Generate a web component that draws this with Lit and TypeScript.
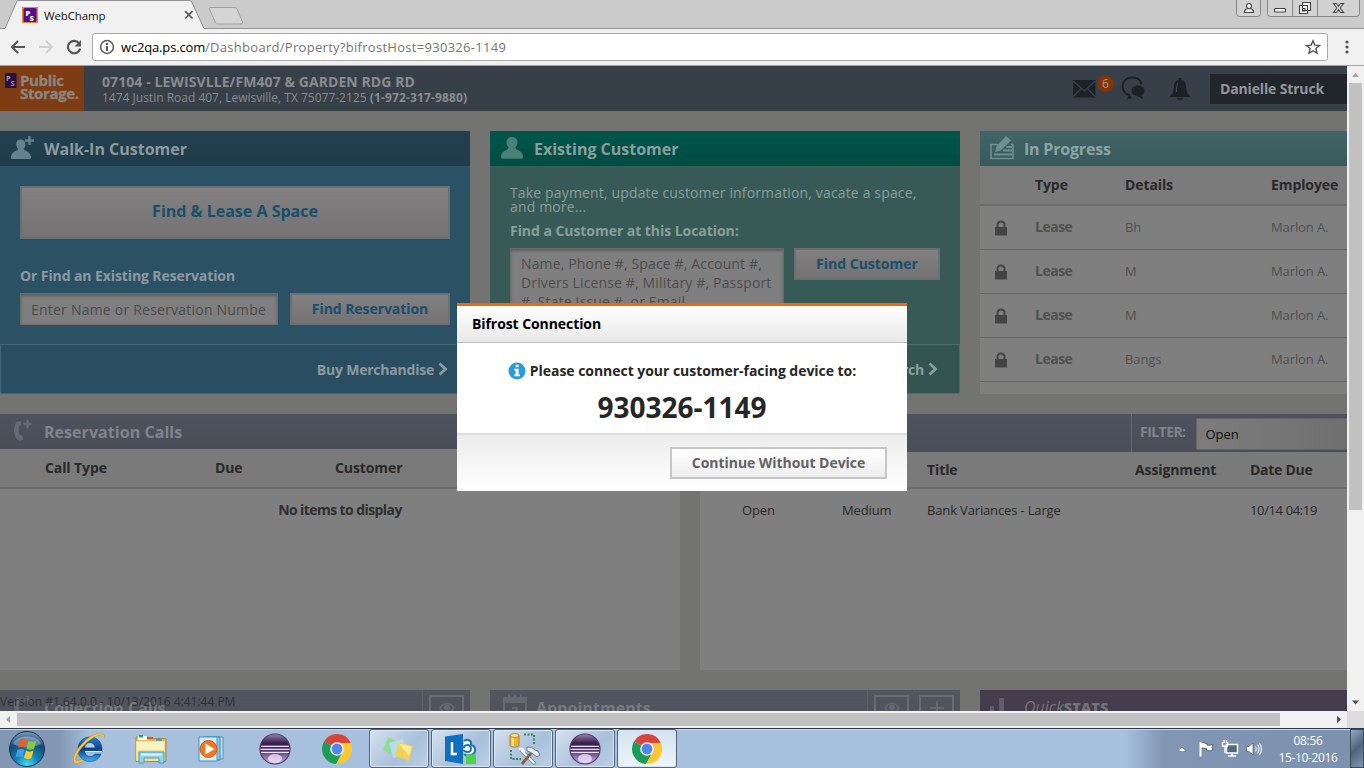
import { LitElement, html, svg, css } from "lit";

const personIcon = html`<svg width="26" height="26" viewBox="0 0 26 26"><path fill="currentColor" d="M12 2c3.400 0 5.500 2.300 5.500 5.500 0 2.200-1 4-2.300 5 .3 1.500 1.800 2 4 3.200 2.500 1.300 3.800 3.600 3.800 6.300 0 1.300-.7 1.800-2 1.800H3c-1.300 0-2-.5-2-1.800 0-2.700 1.300-5 3.800-6.300 2.200-1.200 3.700-1.700 4-3.200-1.300-1-2.300-2.800-2.300-5C6.500 4.300 8.600 2 12 2z"/></svg>`;

const personPlus = html`<svg width="26" height="26" viewBox="0 0 26 26"><path fill="currentColor" d="M10.500 4.500c3 0 5 2 5 4.800 0 2-.8 3.500-2 4.500.2 1.300 1.700 1.800 3.500 2.700 2.600 1.200 4 3.300 4 5.700 0 1.300-.6 1.800-1.800 1.800H2.600C1.500 24 1 23.500 1 22.200c0-2.400 1.200-4.500 3.700-5.700 2-.9 3.300-1.400 3.500-2.700-1.200-1-2-2.500-2-4.500C6.200 6.500 7.700 4.500 10.500 4.500z"/><path d="M19.500 1v9M15 5.500h9" stroke="currentColor" stroke-width="2.400" fill="none"/></svg>`;

const noteIcon = html`<svg width="26" height="26" viewBox="0 0 26 26"><path d="M8 9.500H1v14h22v-14h-2" fill="none" stroke="currentColor" stroke-width="1.600"/><path fill="currentColor" d="M16 1l5 4.500L10.500 15.500 5 17l1.500-5.500zM13 14.500h9v2h-9zM4 18.600h18v2H4zM16.500 11h5.500v2h-5.500z"/></svg>`;

const phoneIcon = html`<svg width="26" height="26" viewBox="0 0 26 26"><path fill="currentColor" d="M7 3.500h3.600c.6 1.200.9 2.700.6 4l-2.300 1.200c-.7 2.800-.4 5.500.8 8.300l2.500.4c1 1.300 1.300 2.500 1.200 3.800L10 23C6.500 21.500 4.200 17.500 4 13 3.900 9.300 4.800 5.800 7 3.500z"/><path d="M17.500 2v8M13.500 6h8" stroke="currentColor" stroke-width="2.400"/></svg>`;

const calendarIcon = html`<svg width="26" height="26" viewBox="0 0 26 26"><path d="M2 4h22v20H2z" fill="none" stroke="currentColor" stroke-width="2"/><path d="M2.500 4h21v5h-21z" fill="currentColor"/><path d="M7 0v7M13 1v6M19 0v7" stroke="currentColor" stroke-width="2"/><path d="M10 14h5l-2 7" fill="none" stroke="currentColor" stroke-width="2"/></svg>`;

const barsIcon = html`<svg width="26" height="26" viewBox="0 0 26 26"><path fill="currentColor" d="M0 13h4v13H0zM9 5h5v21H9zM18 21h4v5h-4z"/></svg>`;

const lockIcon = html`<svg width="14" height="16" viewBox="0 0 14 16"><path fill="currentColor" d="M1 7h12v8.500H1z"/><path d="M3.500 8V5.200c0-5 7-5 7 0V8" fill="none" stroke="currentColor" stroke-width="2"/></svg>`;

const eyeIcon = html`<svg width="16" height="12" viewBox="0 0 16 12"><path d="M1 6c3.500-6 10.500-6 14 0-3.500 6-10.500 6-14 0z" fill="none" stroke="currentColor" stroke-width="1.500"/><circle cx="8" cy="5.500" r="3" fill="currentColor"/></svg>`;
const plusIcon = html`<svg width="16" height="16" viewBox="0 0 16 16"><path d="M8 1v14M1 8h14" stroke="currentColor" stroke-width="2"/></svg>`;
const chevron = html`<svg width="10" height="14" viewBox="0 0 10 14"><path d="M1.500 1.500L7.500 7l-6 5.500" fill="none" stroke="currentColor" stroke-width="2.800"/></svg>`;

const eclipse = html`<svg width="32" height="32" viewBox="0 0 32 32"><defs><linearGradient id="ec" x1="0" y1="0" x2="0" y2="1"><stop offset="0" stop-color="#9a84b0"/><stop offset=".3" stop-color="#3a2050"/><stop offset=".55" stop-color="#4e2f6e"/><stop offset="1" stop-color="#d9bdea"/></linearGradient></defs><circle cx="16" cy="16" r="15" fill="url(#ec)" stroke="#54366c" stroke-width="1.200"/><ellipse cx="16" cy="25.500" rx="7" ry="4.500" fill="#f3e6fa" opacity=".75"/><path d="M2 13.300h28M1.500 16.300h29M2 19.300h28" stroke="#e9e2f0" stroke-width="1.300"/></svg>`;

const chrome = html`<svg width="32" height="32" viewBox="0 0 32 32"><path d="M16 16L3 8.500A15 15 0 0 1 29.800 10H16z" fill="#d8453a"/><path d="M3 8.500A15 15 0 0 0 15 31l6.500-12L16 16z" fill="#1c9c57"/><path d="M29.800 10A15 15 0 0 1 15 31l7-12-3-9z" fill="#fdc82f"/><circle cx="16" cy="16" r="6.800" fill="#f4f4f4"/><circle cx="16" cy="16" r="5.400" fill="#4d87ee"/></svg>`;

const ie = html`<svg width="36" height="36" viewBox="0 0 36 36"><defs><linearGradient id="ieg" x1="0" y1="0" x2="0" y2="1"><stop offset="0" stop-color="#2b80cf"/><stop offset=".5" stop-color="#0b3f8c"/><stop offset="1" stop-color="#3bb4ef"/></linearGradient></defs><path fill="url(#ieg)" stroke="#0a4788" stroke-width=".6" d="M19 6c7 0 12 5 12 12v3H14c.5 3 2.300 4.500 5 4.500 2.300 0 3.700-.8 4.600-2.500H30c-1.800 4.800-5.800 7.500-11.200 7.500C12 30.500 7 25.500 7 18.300S12 6 19 6z"/><path d="M14 16.500c.5-3 2.300-4.500 4.900-4.500s4.600 1.500 4.900 4.500z" fill="#b5cee8"/><path d="M14 20.700h17" stroke="#d6ecfb" stroke-width="1.400"/><path d="M32 6.500c1.500-4-4-4.500-10.500-.8C13 10.500 4.500 21 3.500 28c-.5 4.500 3.500 4 8 1" fill="none" stroke="#c98f1c" stroke-width="2.800"/><path d="M32 6.500c1.500-4-4-4.500-10.500-.8C13 10.500 4.500 21 3.500 28c-.5 4.500 3.500 4 8 1" fill="none" stroke="#f6c944" stroke-width="1.900"/></svg>`;

const explorer = html`<svg width="36" height="34" viewBox="0 0 36 34"><path d="M3 5h13l2 1.500h15v23H3z" fill="#e2bd58" stroke="#a98a3a"/><path d="M5 4h9v4H5z" fill="#fff"/><path d="M6 3h4v2.500H6z" fill="#25a25a"/><path d="M14 5h6v2h-6z" fill="#d95036"/><path d="M23 7h6v2h-6z" fill="#4a9fd0"/><path d="M3 9h29v20H3z" fill="#f6e08c"/><path d="M4 10h27v8H4z" fill="#fcf3c4"/><path d="M6 20h25v11h-5v-5H11v5H6z" fill="#8fd4f0" stroke="#4a9cc8" stroke-width="1"/><path d="M8 21.500h21v2H8z" fill="#d9f4fd"/></svg>`;

const player = html`<svg width="34" height="32" viewBox="0 0 34 32"><path d="M10 4h17v22H10z" fill="#bfe2f5" stroke="#4a94c4"/><path d="M7 4h17v23H7z" fill="#8cc6e8" stroke="#3d86b8"/><path d="M3 4h18v24H3z" fill="#d4ebf8" stroke="#4a94c4"/><circle cx="12.500" cy="16" r="8.500" fill="#ef7821" stroke="#d05f10"/><path d="M9.500 10.500l9 5.500-9 5.500z" fill="#fff"/></svg>`;

const notes = html`<svg width="34" height="32" viewBox="0 0 34 32"><path d="M6 4l11 5-6 13-10-5z" fill="#8fdc92"/><path d="M7 10l14-4 3 16-13 3z" fill="#b4dcf5"/><path d="M16 9l15 4-4 15-14-5z" fill="#f0d254"/><path d="M17 10.500l12.500 3.300-2.500 9.500z" fill="#fbeb98"/></svg>`;

const lync = html`<svg width="34" height="32" viewBox="0 0 34 32"><path d="M1 3.500L19 1v30L1 28z" fill="#0f6fc0"/><path d="M8 9v12h5" fill="none" stroke="#fff" stroke-width="2.500"/><path d="M20 8c4-3 8 0 7 4 5 1 6 8 0 10-3 .8-6 0-7-1" fill="#fff" stroke="#1674c4" stroke-width="2"/><path d="M20 15c0-3 4-4 6-2s1 6-2 6-4-1-4-2" fill="none" stroke="#1674c4" stroke-width="2"/><path d="M22 21.500h10v9.500H22z" fill="#4fd14c"/></svg>`;

const dbTools = html`<svg width="36" height="34" viewBox="0 0 36 34"><path d="M5 3h9v11H5z" fill="#f0b428"/><path d="M6.500 4h2.500v10H6.500z" fill="#fde48e"/><ellipse cx="9.500" cy="3.500" rx="4.500" ry="2" fill="#fbe39a" stroke="#c38618"/><path d="M5 3.500v10c0 2 9 2 9 0v-10" fill="none" stroke="#b67d14"/><path d="M19 2.500h10v10M6 18v9h10" fill="none" stroke="#2b8a36" stroke-width="1.800" stroke-dasharray="2 1.500"/><path d="M16 18l14 14" stroke="#6e7a88" stroke-width="3.400"/><path d="M14 17c4-1 6 1 5 5M16 18l13.500 13.500" stroke="#f4f7fa" stroke-width="2" fill="none"/><path d="M27 20L17 32" stroke="#7c6434" stroke-width="2.800"/><path d="M22 15c4 0 6 1 8 3l3 1 2 4-3 2-4-3-3-2-3-1z" fill="#e6ecf2" stroke="#6f7c8c"/></svg>`;

const orb = html`<svg width="38" height="38" viewBox="0 0 38 38"><defs><radialGradient id="ob" cx=".5" cy=".95" r=".9"><stop offset="0" stop-color="#3fe0f5"/><stop offset=".35" stop-color="#1787b8"/><stop offset=".75" stop-color="#124a78"/><stop offset="1" stop-color="#6f93b4"/></radialGradient></defs><circle cx="19" cy="19" r="17.500" fill="url(#ob)" stroke="#16324c"/><path d="M5 14C8 4 30 4 33 14 25 18 12 18 5 14z" fill="#fff" opacity=".33"/><path d="M12 10c3-1.800 5-1.300 7 0l-2 8c-2-1.500-4-1.800-7 0z" fill="#ee5a24"/><path d="M20.500 10.800c2 1.300 5 1.300 8 0l-2.500 8c-3 1.400-5 1-7.500-.4z" fill="#8cc63e"/><path d="M9.500 20c3-1.600 5-1.300 7 0l-2 7.500c-2.200-1.200-4-1.500-7 0z" fill="#3fa0e8"/><path d="M18 20.600c2.300 1.400 5 1.400 7.500 0l-2 7.500c-3 1.300-5 1-7.500-.4z" fill="#fcc92c"/></svg>`;

const infoIcon = html`<svg width="18" height="18" viewBox="0 0 18 18"><circle cx="9" cy="9" r="8.500" fill="#2a9bd4"/><path fill="#fff" d="M7.600 2.800h3v2.500h-3zM6.200 6.800h4.400v5.700H12v1.700H6.200v-1.700h1.400V8.500H6.200z"/></svg>`;

const LEASES = ["Bh", "M", "M", "Bangs"];

class BrowserBar extends LitElement {
  static styles = css`
    :host { display: block; font-family: "Open Sans", sans-serif; color: #111; }
    svg { display: block; }
    .strip { height: 28px; background: #cbcbcb; display: grid; }
    .strip > * { grid-area: 1 / 1; }
    .tab { display: flex; align-items: center; height: 28px; padding-left: 22px; width: 176px; box-sizing: border-box; margin-top: 1px; }
    .name { letter-spacing: -.15px; font-size: 11.500px; margin: 0 auto 0 6px; }
    .close { margin: 10px 0 0 184px; }
    .win { justify-self: end; margin-right: 4px; }
    .bar { height: 37px; background: #f1f1f1; border-bottom: 1px solid #a3a3a3; display: flex; align-items: center; }
    .nav { display: flex; gap: 10px; padding: 0 9px; }
    .addr { width: 1236px; height: 28px; box-sizing: border-box; background: #fff; border: 1px solid #a9a9a9; border-radius: 3px; display: flex; align-items: center; padding: 0 6px; font-size: 13px; color: #757575; white-space: pre; }
    .host { color: #000; margin-left: 6px; letter-spacing: -.16px; }
    .path { letter-spacing: .29px; }
    .star { margin-left: auto; }
    .menu { margin-left: 15px; }
  `;
  render() {
    return html`
      <div class="strip">
        <svg width="1364" height="29" viewBox="0 0 1364 29">
          <path d="M0 28.500H5L16.500 2Q17 .5 19 .5H189Q191 .5 191.800 2L204 28.500H1364" fill="none" stroke="#929292"/>
          <path d="M5.500 29L17 2.500Q17.500 1 19 1H189Q190.500 1 191.200 2.500L203.500 29z" fill="#f1f1f1"/>
          <path d="M210 7.500H235Q236.500 7.500 237 9L242.500 22Q243 24 241 24H218Q216 24 215.500 23L209.500 9Q209 7.500 210 7.500z" fill="#d4d4d4" stroke="#a0a0a0"/>
        </svg>
        <div class="tab">
          <svg width="16" height="16" viewBox="0 0 16 16"><path d="M0 0h16v16H0z" fill="#f08322"/><rect x="1.500" y="1" width="13" height="14" rx="1.500" fill="#54108c"/><text x="3.500" y="8.500" font-size="7.500" font-weight="800" fill="#fff">P</text><text x="7.500" y="13.500" font-size="7.500" font-weight="800" fill="#fff">S</text></svg>
          <span class="name">WebChamp</span>
        </div>
        <svg class="win" width="172" height="18" viewBox="0 0 172 18">
          <path d="M48.500 -1V13.500Q48.500 16.500 51.500 16.500H69.500Q72.500 16.500 72.500 13.500V-1M79.500 -1V13.500Q79.500 16.500 82.500 16.500H168.500Q171.500 16.500 171.500 13.500V-1M104.500 0V16M129.500 0V16" fill="#d2d2d2" stroke="#868686"/>
          <g fill="#f6f6f6" stroke="#444" stroke-width="1.100"><circle cx="61" cy="6" r="2.500"/><path d="M56.500 12.500V11q1-2.500 4.500-2.500t4.500 2.500v1.500z"/><rect x="86.500" y="8.500" width="11" height="3.500" rx="1"/><path d="M114.500 2.500h8v8h-8zM111.500 5.500h8v8h-8zM114.500 8.500h2.500v2.500h-2.500z"/><path d="M145.500 3.500h3l2 3 2-3h3l-3.500 4.500 3.500 4.500h-3l-2-3-2 3h-3l3.500-4.500z"/></g>
        </svg>
        <svg class="close" width="10" height="10" viewBox="0 0 10 10"><path d="M1.200 1.200l7.300 7.300M8.500 1.200L1.200 8.500" stroke="#555" stroke-width="1.700"/></svg>
      </div>
      <div class="bar">
        <div class="nav">
          <svg width="18" height="18" viewBox="0 0 18 18"><path d="M16 9H3M9 3L3 9l6 6" fill="none" stroke="#555" stroke-width="2"/></svg>
          <svg width="18" height="18" viewBox="0 0 18 18"><path d="M2 9h13M9 3l6 6-6 6" fill="none" stroke="#cfcfcf" stroke-width="2"/></svg>
          <svg width="18" height="18" viewBox="0 0 18 18"><path d="M14.300 5.500A6.200 6.200 0 1 0 15.200 10.500" fill="none" stroke="#555" stroke-width="2.200"/><path d="M16 2v6.500H9.500z" fill="#555"/></svg>
        </div>
        <div class="addr">
          <svg width="16" height="16" viewBox="0 0 16 16"><circle cx="8" cy="8" r="6.400" fill="none" stroke="#5a5a5a" stroke-width="1.500"/><path d="M7 4h2v2H7zM7 7h2v5H7z" fill="#5a5a5a"/></svg>
          <span class="host">wc2qa.ps.com</span><span class="path">/Dashboard/Property?bifrostHost=930326-1149</span>
          <svg class="star" width="16" height="16" viewBox="0 0 16 16"><path d="M8 1.800l1.800 4.300 4.700.4-3.600 3 1.100 4.600L8 11.700l-4 2.400 1.100-4.600-3.600-3 4.700-.4z" fill="none" stroke="#555" stroke-width="1.400"/></svg>
        </div>
        <svg class="menu" width="8" height="16" viewBox="0 0 8 16"><g fill="#555"><circle cx="4" cy="3" r="1.600"/><circle cx="4" cy="8" r="1.600"/><circle cx="4" cy="13" r="1.600"/></g></svg>
      </div>`;
  }
}
customElements.define("browser-bar", BrowserBar);

class SiteHeader extends LitElement {
  static styles = css`
    :host { display: flex; height: 45px; background: linear-gradient(#383f49, #364047); font-family: "Open Sans", sans-serif; color: #888c8f; }
    svg { display: block; }
    .logo { width: 84px; background: #7e3c13; display: flex; color: #8c8580; font: 700 15px/13px "Open Sans", sans-serif; padding: 7px 0 0 5px; box-sizing: border-box; }
    .logo svg { flex: none; }
    .brand { margin: 1px 0 0 3px; letter-spacing: -.35px; -webkit-text-stroke: .3px; }
    .info { margin: 7px auto 0 18px; white-space: nowrap; }
    .site { font-weight: 700; font-size: 14px; line-height: 18px; letter-spacing: .08px; }
    .where { font-size: 12px; line-height: 14px; }
    .where b { letter-spacing: .15px; }
    .icons { display: flex; align-items: center; padding-right: 19px; color: #1c2126; }
    .badge { width: 17px; height: 17px; border-radius: 50%; background: #833408; color: #a39a94; font-size: 12px; line-height: 17px; text-align: center; margin: 0 7px 11px 1px; }
    .user { width: 137px; box-sizing: border-box; height: 30px; margin-top: 8px; background: #21262b; font-weight: 700; font-size: 14px; line-height: 30px; letter-spacing: -.15px; padding-left: 10px; color: #93979a; }
    .chat { margin-right: 24px; }
  `;
  render() {
    return html`
      <div class="logo">
        <svg width="12" height="16" viewBox="0 0 12 16"><rect width="11.500" height="15" rx="1.500" fill="#2a0d47"/><text x="1" y="7.500" font-size="7.500" font-weight="700" fill="#999">P</text><text x="5.500" y="13" font-size="7.500" font-weight="700" fill="#999">S</text></svg>
        <div class="brand">Public<br>Storage.</div>
      </div>
      <div class="info">
        <div class="site">07104 - LEWISVLLE/FM407 &amp; GARDEN RDG RD</div>
        <div class="where">1474 Justin Road 407, Lewisville, TX 75077-2125 <b>(1-972-317-9880)</b></div>
      </div>
      <div class="icons">
        <svg width="23" height="18" viewBox="0 0 23 18"><path d="M0 0h22.500v17.500H0z" fill="currentColor"/><path d="M0 1l11.200 10L22.500 1M0 17l8-8.500M22.500 17l-8-8.500" fill="none" stroke="#394149" stroke-width="1.300"/></svg>
        <div class="badge">6</div>
        <svg class="chat" width="24" height="25" viewBox="0 0 24 25"><path d="M9 19.500C-1.500 17 -1 2 11 1.500c5 0 8.500 2.500 9.500 6.500" fill="none" stroke="currentColor" stroke-width="2"/><path d="M8 19l-2.500 4.500 6-1.500z" fill="currentColor"/><path d="M17 9.500c3.500 0 6.500 2.300 6.500 5.300 0 2.200-1.400 3.700-3 4.500l1.500 4-5.500-3.400c-3.400 0-6-2.200-6-5.100 0-3 2.700-5.300 6.500-5.300z" fill="currentColor"/></svg>
        <svg width="22" height="24" viewBox="0 0 22 24"><path fill="currentColor" d="M9.500 1h3v2c3.500 1 4.700 4 4.700 7 0 4 .8 6.500 3.800 9v1H1v-1c3-2.500 3.800-5 3.800-9 0-3 1.200-6 4.700-7zM8 21h6c-.5 3-5.500 3-6 0z"/><path d="M9 6c-1.500 2-1.300 5-1.700 9" stroke="#4b5359" fill="none"/></svg>
      </div>
      <div class="user">Danielle Struck</div>`;
  }
}
customElements.define("site-header", SiteHeader);

class DashboardPage extends LitElement {
  static styles = css`
    :host { display: block; width: 1347px; height: 645px; overflow: hidden; background: #737371; font-family: "Open Sans", sans-serif; font-size: 14px; color: #2f2f2f; position: relative; }
    svg { display: block; flex: none; }
    .row { display: flex; gap: 20px; margin-top: 20px; }
    .panel { flex: none; display: flex; flex-direction: column; width: 470px; }
    .r1 .panel { height: 263px; }
    .r2 .panel { width: 680px; height: 256px; background: #7f7f7f; }
    .head { height: 35px; flex: none; display: flex; align-items: center; gap: 8px; padding-left: 10px; font-weight: 700; font-size: 16px; box-sizing: border-box; }
    .head svg { margin-top: -1px; }
    .walk { background: #2b5165; color: #8d999f; }
    .walk .head { background: linear-gradient(#22404f, #203c4b); }
    .walk .head svg { color: #64838f; }
    .exist { background: #375a56; color: #8a9f9b; }
    .exist .head { background: linear-gradient(#00564b, #024b42); }
    .exist .head svg { color: #4a8078; }
    .prog { background: #7f7f7f; }
    .prog .head { background: linear-gradient(#416667, #375a5c); color: #8ea3a4; letter-spacing: -.2px; }
    .prog .head svg { color: #6f9092; }
    .body { flex: 1; padding: 20px 20px 0; }
    .btn { box-sizing: border-box; height: 32px; width: 160px; border: 2px solid #6a6f71; background: linear-gradient(#828080, #747272); color: #184f6c; font-weight: 700; font-size: 14px; line-height: 28px; text-align: center; letter-spacing: -.07px; }
    .big { height: 53px; width: auto; line-height: 46px; font-size: 16px; letter-spacing: 0; }
    .customer { width: 146px; letter-spacing: 0; }
    .label { font-weight: 700; line-height: 20px; letter-spacing: -.1px; margin: 27px 0 7px; }
    .exist .label { margin: 7px 0; letter-spacing: -.05px; }
    .intro { line-height: 14px; letter-spacing: .15px; }
    .fields { display: flex; gap: 12px; align-items: flex-start; }
    .exist .fields { gap: 10px; }
    .field { box-sizing: border-box; width: 258px; height: 32px; border: 1px solid #6c6c6c; background: #7f7f7f; box-shadow: inset 0 2px 3px #5e5e5e; color: #4c4c4c; line-height: 31px; padding: 0 10px; letter-spacing: .22px; white-space: nowrap; overflow: hidden; }
    .area { width: 274px; height: 64px; line-height: 19px; letter-spacing: .15px; padding-top: 5px; }
    .foot { height: 50px; box-sizing: border-box; border: 1px solid #3f6777; background: #294e61; display: flex; align-items: center; justify-content: flex-end; padding: 0 21px 0 0; gap: 4px; font-weight: 700; font-size: 14px; letter-spacing: -.22px; }
    .exist .foot { border-color: #4c6f69; background: #33544f; }
    .cols { display: grid; align-items: center; box-sizing: border-box; font-weight: 700; letter-spacing: -.1px; border-bottom: 2px solid #6c6c6c; color: #292929; }
    .three { grid-template-columns: 55px 90px 146px 180px; }
    .three.h { height: 40px; padding-bottom: 1px; background: #7b7b7b; }
    .lease { height: 44px; border-bottom: 1px solid #696969; color: #505050; letter-spacing: -.5px; padding-bottom: 2px; }
    .lease .n { font-weight: 400; font-size: 13px; letter-spacing: -.1px; }
    .lease svg { margin: 3px 0 0 14px; color: #444; }
    .calls { grid-template-columns: 45px 170px 120px 1fr; height: 40px; padding-bottom: 2px; background: #7a7a7a; }
    .none { font-weight: 700; text-align: center; font-size: 14px; letter-spacing: -.58px; line-height: 20px; margin-top: 11px; }
    .slate { background: linear-gradient(#4e525e, #494e59); color: #80848e; letter-spacing: .05px; }
    .slate svg { color: #656a76; }
    .tall { height: 38px; }
    .tasks { grid-template-columns: 42px 100px 85px 208px 115px 1fr; height: 37px; background: #7a7a7a; padding-bottom: 1px; }
    .item { height: 43px; border: 0; font-weight: 400; font-size: 13px; background: none; letter-spacing: -.15px; }
    .date { letter-spacing: -.28px; }
    .item .date { letter-spacing: -.37px; }
    .filter { margin: 0 0 0 auto; width: 249px; height: 38px; border-left: 1px solid #646873; display: flex; align-items: center; font-size: 14px; letter-spacing: -.55px; box-sizing: border-box; padding: 0 0 4px 8px; }
    .select { margin: 5px 0 0 10px; width: 190px; height: 32px; background: linear-gradient(90deg, #7c7c7c, #6d6d6d); border: 1px solid #646464; box-sizing: border-box; color: #0c0c0c; font-weight: 400; font-size: 13px; line-height: 31px; padding-left: 9px; letter-spacing: -.1px; }
    .low { background: linear-gradient(#53565e, #4e5159); color: #777a80; }
    .low svg { color: #66696f; }
    .appt { padding-left: 12px; letter-spacing: .05px; }
    .tools { display: flex; gap: 10px; margin-left: auto; border-left: 1px solid #5e6167; height: 35px; padding: 5px 6px 0; box-sizing: border-box; }
    .tools span { width: 35px; height: 26px; border: 2px solid #696c72; box-sizing: border-box; display: flex; justify-content: center; align-items: center; }
    .stats { background: #443d4b; color: #77717b; padding-bottom: 2px; }
    .stats svg { color: #625b69; }
    .stats i { font-weight: 400; }
    .stats b { font-size: 14.500px; }
    .version { position: absolute; left: 0; bottom: 0; font-size: 12px; line-height: 18px; color: #2f3035; white-space: nowrap; }
  `;
  render() {
    return html`
      <site-header></site-header>
      <div class="row r1">
        <section class="panel walk">
          <div class="head">${personPlus}<span>Walk-In Customer</span></div>
          <div class="body">
            <div class="btn big">Find &amp; Lease A Space</div>
            <div class="label">Or Find an Existing Reservation</div>
            <div class="fields"><div class="field">Enter Name or Reservation Numbe</div><div class="btn">Find Reservation</div></div>
          </div>
          <div class="foot">Buy Merchandise ${chevron}</div>
        </section>
        <section class="panel exist">
          <div class="head">${personIcon}<span>Existing Customer</span></div>
          <div class="body">
            <div class="intro">Take payment, update customer information, vacate a space, and more...</div>
            <div class="label">Find a Customer at this Location:</div>
            <div class="fields"><div class="field area">Name, Phone #, Space #, Account #,<br>Drivers License #, Military #, Passport<br>#, State Issue #, or Email</div><div class="btn customer">Find Customer</div></div>
          </div>
          <div class="foot">Search ${chevron}</div>
        </section>
        <section class="panel prog">
          <div class="head">${noteIcon}<span>In Progress</span></div>
          <div class="cols three h"><i></i><span>Type</span><span>Details</span><span>Employee</span></div>
          ${LEASES.map(d => html`<div class="cols three lease"><i>${lockIcon}</i><span>Lease</span><span class="n">${d}</span><span class="n">Marlon A.</span></div>`)}
        </section>
      </div>
      <div class="row r2">
        <section class="panel">
          <div class="head slate">${phoneIcon}<span>Reservation Calls</span></div>
          <div class="cols calls"><i></i><span>Call Type</span><span>Due</span><span>Customer</span></div>
          <div class="none">No items to display</div>
        </section>
        <section class="panel">
          <div class="head slate tall"><div class="filter">FILTER:<div class="select">Open</div></div></div>
          <div class="cols tasks"><i></i><span></span><span></span><span>Title</span><span>Assignment</span><span class="date">Date Due</span></div>
          <div class="cols tasks item"><i></i><span>Open</span><span>Medium</span><span>Bank Variances - Large</span><span></span><span class="date">10/14 04:19</span></div>
        </section>
      </div>
      <div class="row">
        <section class="panel"><div class="head low">${phoneIcon}<span>Collection Calls</span><div class="tools"><span>${eyeIcon}</span></div></div></section>
        <section class="panel"><div class="head low appt">${calendarIcon}<span>Appointments</span><div class="tools"><span>${eyeIcon}</span><span>${plusIcon}</span></div></div></section>
        <section class="panel"><div class="head stats">${barsIcon}<span><i>Quick</i><b>STATS</b></span></div></section>
      </div>
      <div class="version">Version #1.64.0.0 - 10/13/2016 4:41:44 PM</div>`;
  }
}
customElements.define("dashboard-page", DashboardPage);

class DeviceDialog extends LitElement {
  static styles = css`
    :host { display: block; width: 450px; height: 188px; box-sizing: border-box; border-top: 3px solid #ea6a17; background: #fff; font-family: "Open Sans", sans-serif; }
    svg { display: block; }
    .title { height: 37px; box-sizing: border-box; border-bottom: 1px solid #bdbdbd; background: linear-gradient(#fff, #e8e8e8); font-weight: 700; font-size: 14px; line-height: 36px; padding-left: 15px; letter-spacing: -.08px; color: #000; }
    .msg { display: flex; justify-content: center; align-items: center; gap: 4px; margin-top: 18px; height: 20px; font-weight: 700; font-size: 14px; letter-spacing: -.04px; color: #262626; }
    .msg span { margin-top: -2px; }
    .code { text-align: center; font-weight: 700; font-size: 28px; line-height: 36px; margin-top: 8px; color: #262626; }
    .actions { margin-top: 8px; height: 57px; box-sizing: border-box; border-top: 2px solid #dedede; background: linear-gradient(#ececec, #fff); display: flex; justify-content: flex-end; padding: 12px 20px 0 0; }
    .btn { width: 217px; height: 32px; box-sizing: border-box; border: 2px solid #c6c6c6; background: linear-gradient(#fff, #ededed); text-align: center; font-weight: 700; font-size: 14px; line-height: 28px; letter-spacing: -.05px; color: #636363; }
  `;
  render() {
    return html`
      <div class="title">Bifrost Connection</div>
      <div class="msg">${infoIcon}<span>Please connect your customer-facing device to:</span></div>
      <div class="code">930326-1149</div>
      <div class="actions"><div class="btn">Continue Without Device</div></div>`;
  }
}
customElements.define("device-dialog", DeviceDialog);

class TaskBar extends LitElement {
  static styles = css`
    :host { display: flex; align-items: stretch; height: 40px; box-sizing: border-box; border-top: 1px solid #2b3a4a; background: linear-gradient(90deg, #8297b3 0, #8297b3 60px, #a6c0dd 90px, #a6c0dd 1125px, #8096b2 1165px, #7b91ad 1364px); box-shadow: inset 0 1px #c6d8ea; font-family: "Open Sans", sans-serif; }
    svg { display: block; }
    .slot, .open { width: 62px; display: flex; align-items: center; justify-content: center; }
    .slot.first { width: 54px; margin-right: 4px; }
    .open { width: 60px; box-sizing: border-box; border: 1px solid #52677f; border-radius: 3px; margin: 0 1px; box-shadow: inset 0 0 0 1px #d9e6f3; background: linear-gradient(135deg, #d5e1ee, #a9c0db 60%, #bccfe4); }
    .active { background: linear-gradient(#d5e2ef, #eef4fa); }
    .tray { display: flex; align-items: center; gap: 6px; margin-left: auto; }
    .up { margin-right: 4px; }
    .clock { width: 64px; margin: 0 10px 0 7px; text-align: center; color: #fff; font-size: 12px; line-height: 17px; letter-spacing: -.36px; }
    .show { width: 14px; box-sizing: border-box; border: 1px solid #3b4c60; background: linear-gradient(135deg, #93a8c0, #4e637c 50%, #8298b2); }
  `;
  render() {
    return html`
      <div class="slot first">${orb}</div>
      <div class="slot">${ie}</div><div class="slot">${explorer}</div><div class="slot">${player}</div><div class="slot">${eclipse}</div><div class="slot">${chrome}</div>
      <div class="open">${notes}</div><div class="open">${lync}</div><div class="open">${dbTools}</div><div class="open">${eclipse}</div><div class="open active">${chrome}</div>
      <div class="tray">
        <svg class="up" width="10" height="6" viewBox="0 0 10 6"><path d="M1 5.500L5 1l4 4.500z" fill="#fff" stroke="#5a6c82" stroke-width=".6"/></svg>
        <svg width="18" height="18" viewBox="0 0 18 18"><path d="M4 3c3-1.500 4 1 6 .5V5c2 .5 4 0 6-.5l-1 3 1 2.500c-2 1-4 1-6.500 0V8.500c-2 .5-3-1-5.500-.2" fill="#fff" stroke="#3e4e62" stroke-width=".8"/><path d="M3.500 2v14.500" stroke="#fff" stroke-width="2"/></svg>
        <svg width="18" height="18" viewBox="0 0 18 18"><path d="M5.500 4.500h11v8.500h-11z" fill="#54687f" stroke="#fff" stroke-width="1.500"/><path d="M7 16h8M11 13v3" stroke="#fff" stroke-width="1.600"/><path d="M1.500 2v4h5V2M3 0v3M5.500 0v3M4 6v7" stroke="#fff" stroke-width="1.400" fill="none"/></svg>
        <svg width="18" height="18" viewBox="0 0 18 18"><path d="M1.500 6.500H4L8 3v12l-4-3.500H1.500z" fill="#fff" stroke="#46586e" stroke-width=".7"/><path d="M10.500 6.500q1.500 2.500 0 5M12.500 4.500q3 4.500 0 9M14.500 3q4 6 0 12" fill="none" stroke="#f2f6fa" stroke-width="1.100"/></svg>
        <div class="clock">08:56<br>15-10-2016</div>
      </div>
      <div class="show"></div>`;
  }
}
customElements.define("task-bar", TaskBar);

class AppRoot extends LitElement {
  static styles = css`
    :host { display: block; width: 1364px; height: 768px; overflow: hidden; position: relative; }
    svg { display: block; }
    .mid { display: grid; grid-template: 645px 17px / 1347px 17px; }
    .v, .h { background: #f1f1f1; display: flex; }
    .v { flex-direction: column; align-items: center; }
    .v i { width: 13px; height: 427px; background: #c1c1c1; }
    .h { align-items: center; }
    .h i { width: 1263px; height: 13px; background: #c1c1c1; }
    .h svg:last-child { margin-left: auto; }
    .v svg:last-child { margin-top: auto; }
    .corner { background: #dcdcdc; }
    device-dialog { position: absolute; left: 457px; top: 303px; }
  `;
  render() {
    const arrow = (d: string, c: string) => html`<svg width="17" height="17" viewBox="0 0 17 17">${svg`<path d=${d} fill=${c}/>`}</svg>`;
    return html`
      <browser-bar></browser-bar>
      <div class="mid">
        <dashboard-page></dashboard-page>
        <div class="v">${arrow("M5 11l3.500-4L12 11z", "#a3a3a3")}<i></i>${arrow("M5 6.500h7L8.500 10.500z", "#505050")}</div>
        <div class="h">${arrow("M10 5v7L6 8.500z", "#a3a3a3")}<i></i>${arrow("M7 5v7l4-3.500z", "#505050")}</div>
        <div class="corner"></div>
      </div>
      <task-bar></task-bar>
      <device-dialog></device-dialog>`;
  }
}
customElements.define("app-root", AppRoot);
